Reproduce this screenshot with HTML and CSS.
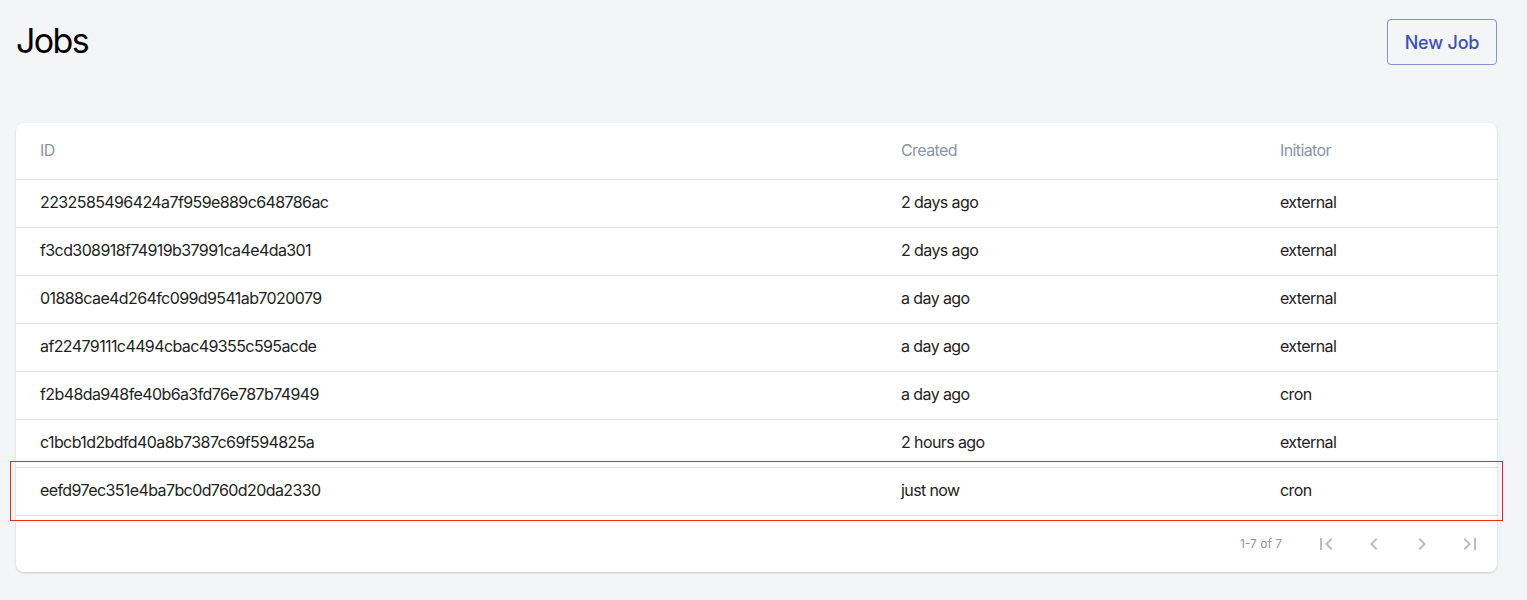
FILE: index.html
```html
<!DOCTYPE html>
<html lang="en">
<head>
<meta charset="utf-8">
<title>Jobs</title>
<link rel="stylesheet" href="styles.css">
</head>
<body>
<div class="page">
  <header class="topbar">
    <h1 class="title">Jobs</h1>
    <button class="btn-outline" type="button">New Job</button>
  </header>

  <section class="card">
    <table class="jobs">
      <colgroup>
        <col class="col-id">
        <col class="col-created">
        <col class="col-init">
      </colgroup>
      <thead>
        <tr><th>ID</th><th>Created</th><th>Initiator</th></tr>
      </thead>
      <tbody>
        <tr><td>2232585496424a7f959e889c648786ac</td><td>2 days ago</td><td>external</td></tr>
        <tr><td>f3cd308918f74919b37991ca4e4da301</td><td>2 days ago</td><td>external</td></tr>
        <tr><td>01888cae4d264fc099d9541ab7020079</td><td>a day ago</td><td>external</td></tr>
        <tr><td>af22479111c4494cbac49355c595acde</td><td>a day ago</td><td>external</td></tr>
        <tr><td>f2b48da948fe40b6a3fd76e787b74949</td><td>a day ago</td><td>cron</td></tr>
        <tr><td>c1bcb1d2bdfd40a8b7387c69f594825a</td><td>2 hours ago</td><td>external</td></tr>
        <tr class="highlight"><td>eefd97ec351e4ba7bc0d760d20da2330</td><td>just now</td><td>cron</td></tr>
      </tbody>
    </table>
    <div class="pager">
      <span class="pager-count">1-7 of 7</span>
      <div class="pager-actions">
        <button class="icon-btn" type="button" disabled aria-label="First page">
          <svg viewBox="0 0 24 24" width="24" height="24"><path d="M18.41 16.59L13.82 12l4.59-4.59L17 6l-6 6 6 6zM6 6h2v12H6z"/></svg>
        </button>
        <button class="icon-btn" type="button" disabled aria-label="Previous page">
          <svg viewBox="0 0 24 24" width="24" height="24"><path d="M15.41 16.59L10.83 12l4.58-4.59L14 6l-6 6 6 6z"/></svg>
        </button>
        <button class="icon-btn" type="button" disabled aria-label="Next page">
          <svg viewBox="0 0 24 24" width="24" height="24"><path d="M8.59 16.59L13.17 12 8.59 7.41 10 6l6 6-6 6z"/></svg>
        </button>
        <button class="icon-btn" type="button" disabled aria-label="Last page">
          <svg viewBox="0 0 24 24" width="24" height="24"><path d="M5.59 7.41L10.18 12l-4.59 4.59L7 18l6-6-6-6zM16 6h2v12h-2z"/></svg>
        </button>
      </div>
    </div>
  </section>
</div>
</body>
</html>
```

FILE: styles.css
```css
* { box-sizing: border-box; }

html, body {
  margin: 0;
  padding: 0;
  background: #f4f5f7;
  font-family: Inter, "Noto Sans", sans-serif;
  color: rgba(0, 0, 0, 0.87);
}

.page {
  padding: 19px 30px 28px 16px;
}

.topbar {
  display: flex;
  justify-content: space-between;
  align-items: flex-start;
  height: 104px;
}

.title {
  margin: 0;
  padding-top: 2px;
  font-size: 34px;
  font-weight: 400;
  line-height: 40px;
  letter-spacing: -1.6px;
  color: #000;
}

.btn-outline {
  height: 46px;
  width: 110px;
  padding: 0;
  border: 1px solid rgba(63, 81, 181, 0.6);
  border-radius: 4px;
  background: transparent;
  color: #3f51b5;
  font-family: inherit;
  font-size: 18px;
  font-weight: 500;
  letter-spacing: -0.2px;
  cursor: pointer;
}

.card {
  background: #fff;
  border-radius: 8px;
  box-shadow: 0 1px 3px rgba(0, 0, 0, 0.12), 0 1px 2px rgba(0, 0, 0, 0.06);
}

.jobs {
  width: 100%;
  border-collapse: collapse;
  table-layout: fixed;
}

.col-id { width: 861px; }
.col-created { width: 379px; }

.jobs th,
.jobs td {
  text-align: left;
  padding: 0 24px 1px;
  border-bottom: 1px solid #e0e0e0;
  font-size: 16px;
  letter-spacing: -0.6px;
  white-space: nowrap;
}

.jobs th {
  height: 56px;
  font-weight: 400;
  color: #8a95a8;
}

.jobs td {
  height: 48px;
  padding-bottom: 3px;
  color: #222;
}

.highlight {
  outline: 1px solid #f0281c;
  outline-offset: 5px;
}

.pager {
  display: flex;
  justify-content: flex-end;
  align-items: center;
  height: 56px;
  padding-right: 3px;
}

.pager-count {
  font-size: 12px;
  color: #8a95a8;
}

.pager-actions {
  display: flex;
  margin-left: 20px;
}

.icon-btn {
  width: 48px;
  height: 48px;
  padding: 12px;
  border: 0;
  background: transparent;
  display: flex;
  align-items: center;
  justify-content: center;
}

.icon-btn svg {
  fill: #bdbdbd;
  display: block;
}
```
